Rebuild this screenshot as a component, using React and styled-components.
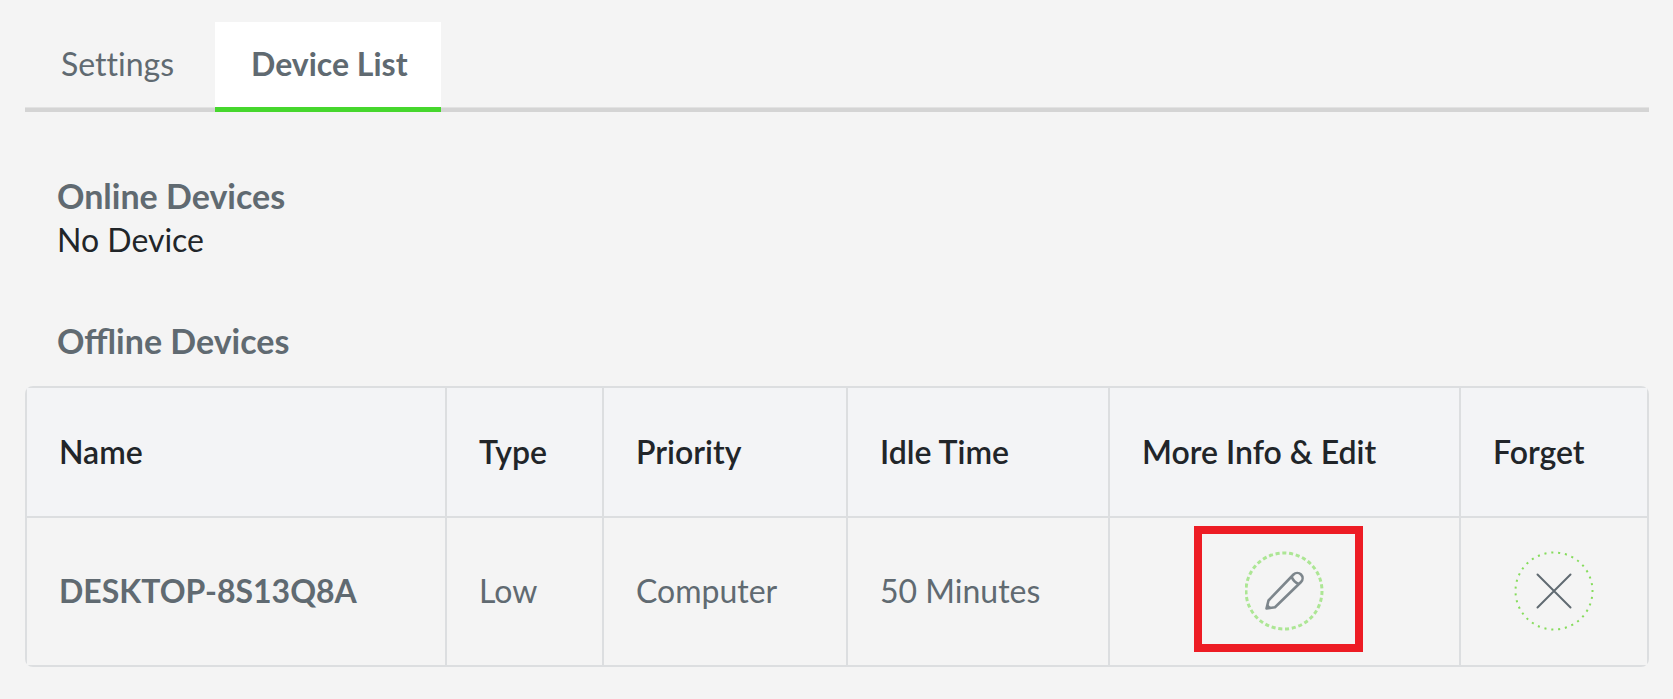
import { useState } from "react"
import styled, { createGlobalStyle } from "styled-components"

const GlobalStyle = createGlobalStyle`
  * {
    box-sizing: border-box;
  }

  body {
    margin: 0;
    background-color: #f4f4f4;
    color: #212529;
    font-family: Lato, "Liberation Sans", sans-serif;
    font-size: 32px;
    line-height: 44px;
  }
`

const Container = styled.main`
  padding: 22px 24px 32px 25px;
`

const Tabs = styled.div`
  display: flex;
  height: 90px;
  box-shadow: inset 0 -4px #d4d4d4, inset 0 -5px #e2e2e2;
`

const Tab = styled.button`
  padding: 0 33px 2px 36px;
  min-width: 190px;
  border: 0;
  border-bottom: 5px solid ${props => props.$active ? "#46d72d" : "transparent"};
  background-color: ${props => props.$active ? "white" : "transparent"};
  color: #606a71;
  font: inherit;
  font-weight: ${props => props.$active ? 700 : 400};
  font-variant-ligatures: none;
  text-align: left;
  cursor: pointer;
`

const Section = styled.section`
  padding: 0 32px;
  margin-top: ${props => props.$first ? "62px" : "57px"};
`

const Heading = styled.h2`
  margin: 0;
  color: #606a71;
  font-size: 34px;
  line-height: 44px;
  font-weight: 700;
`

const Text = styled.p`
  margin: 0;
`

const TableWrapper = styled.div`
  margin-top: 23px;
  border-radius: 8px;
  overflow: hidden;
`

const Table = styled.table`
  width: 100%;
  table-layout: fixed;
  border-collapse: collapse;
`

const HeadCell = styled.th`
  width: ${props => props.$width};
  height: 130px;
  padding: 0 32px;
  border: 2px solid #dcdee0;
  background-color: #f3f4f6;
  font-weight: 600;
  text-align: left;
`

const Cell = styled.td`
  height: 149px;
  padding: 0 32px 2px;
  border: 2px solid #dcdee0;
  color: #606a71;
  font-weight: ${props => props.$bold ? 700 : 400};
`

const Action = styled.div`
  position: relative;
  display: flex;
  justify-content: center;
`

const IconButton = styled.button`
  width: 80px;
  height: 80px;
  padding: 0;
  border: 0;
  background: none;
  cursor: pointer;

  svg {
    display: block;
  }
`

const Highlight = styled.span`
  position: absolute;
  top: -25px;
  left: 52px;
  width: 169px;
  height: 126px;
  border: 8px solid #ed1c24;
  pointer-events: none;
`

const EditIcon = () => (
  <svg width="80" height="80" viewBox="2 0 80 80" fill="none" aria-hidden="true">
    <circle cx="41" cy="40" r="38" stroke="#ace694" strokeWidth="3" pathLength="350" strokeDasharray="6 4" />
    <path
      d="M23.5 57.5 25.5 49.5 50.5 23.5A5.2 5.2 0 0 1 58 31L32 56.2Z M48.5 25.5Q50.5 31 56 33"
      stroke="#7d868c"
      strokeWidth="2.6"
      strokeLinejoin="round"
    />
    <path d="m23.5 57.5 1.2-4.5 3.2 3.4Z" fill="#7d868c" />
  </svg>
)

const ForgetIcon = () => (
  <svg width="80" height="80" viewBox="0 0 80 80" fill="none" aria-hidden="true">
    <circle cx="40" cy="40" r="38.5" stroke="#86dc5c" strokeWidth="2" pathLength="350" strokeDasharray="3 7" strokeDashoffset="1.5" />
    <path d="M23.5 23.5 56.5 56.5M56.5 23.5 23.5 56.5" stroke="#606a71" strokeWidth="2" strokeLinecap="round" />
  </svg>
)

const columns = [
  { title: "Name", width: "auto" },
  { title: "Type", width: "157px" },
  { title: "Priority", width: "244px" },
  { title: "Idle Time", width: "262px" },
  { title: "More Info & Edit", width: "351px" },
  { title: "Forget", width: "188px" },
]

const offlineDevices = [
  { name: "DESKTOP-8S13Q8A", type: "Low", priority: "Computer", idle: "50 Minutes" },
]

const App = () => {
  const [tab, setTab] = useState("Device List")

  return (
    <>
      <GlobalStyle />
      <Container>
        <Tabs role="tablist">
          {["Settings", "Device List"].map(name => (
            <Tab key={name} role="tab" aria-selected={tab === name} $active={tab === name} onClick={() => setTab(name)}>
              {name}
            </Tab>
          ))}
        </Tabs>
        <Section $first>
          <Heading>Online Devices</Heading>
          <Text>No Device</Text>
        </Section>
        <Section>
          <Heading>Offline Devices</Heading>
        </Section>
        <TableWrapper>
          <Table>
            <thead>
              <tr>
                {columns.map(column => (
                  <HeadCell key={column.title} scope="col" $width={column.width}>{column.title}</HeadCell>
                ))}
              </tr>
            </thead>
            <tbody>
              {offlineDevices.map(device => (
                <tr key={device.name}>
                  <Cell $bold>{device.name}</Cell>
                  <Cell>{device.type}</Cell>
                  <Cell>{device.priority}</Cell>
                  <Cell>{device.idle}</Cell>
                  <Cell>
                    <Action>
                      <IconButton aria-label={`Edit ${device.name}`}><EditIcon /></IconButton>
                      <Highlight />
                    </Action>
                  </Cell>
                  <Cell>
                    <Action>
                      <IconButton aria-label={`Forget ${device.name}`}><ForgetIcon /></IconButton>
                    </Action>
                  </Cell>
                </tr>
              ))}
            </tbody>
          </Table>
        </TableWrapper>
      </Container>
    </>
  )
}

export default App
